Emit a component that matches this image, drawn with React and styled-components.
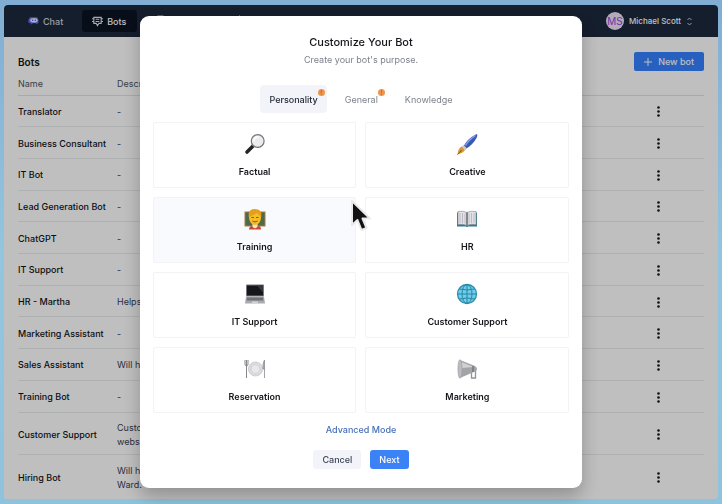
import React from "react";
import styled, { createGlobalStyle } from "styled-components";

const GlobalStyle = createGlobalStyle`
  * { box-sizing: border-box; }
  body {
    margin: 0;
    background: linear-gradient(#82add2, #93c5df 50%, #8fc3dd);
    font-family: Inter, "Liberation Sans", sans-serif;
    color: #14161a;
  }
  button { font: inherit; border: 0; cursor: pointer; }
  svg { display: block; flex: none; }
`;

const Desktop = styled.div`
  min-height: 100vh;
  display: flex;
  padding: 5px 4px;
`;

const Window = styled.div`
  flex: 1;
  min-width: 0;
  border-radius: 4px;
  overflow: hidden;
  background: #fff;
`;

const TopBar = styled.header`
  height: 32px;
  display: flex;
  align-items: center;
  justify-content: space-between;
  padding: 0 25px 0 14px;
  background: #1d283c;
`;

const Nav = styled.nav`
  display: flex;
  gap: 9px;
`;

const NavLink = styled.a`
  display: flex;
  align-items: center;
  gap: 4px;
  height: 22px;
  min-width: ${(p) => (p.$wide ? "67px" : "55px")};
  padding: 0 10px;
  border-radius: 3px;
  font-size: 9px;
  font-weight: 500;
  text-decoration: none;
  color: ${(p) => (p.$active ? "#ffffff" : "#cfd5de")};
  background: ${(p) => (p.$active ? "#0b1322" : "transparent")};
`;

const Account = styled.button`
  display: flex;
  align-items: center;
  gap: 5px;
  padding: 0;
  background: none;
  color: #fff;
  font-size: 8px;
  font-weight: 500;
`;

const Avatar = styled.span`
  width: 18px;
  height: 18px;
  border-radius: 50%;
  background: #f0e3fa;
  color: #9747d8;
  font-size: 10px;
  font-weight: 400;
  line-height: 18px;
  text-align: center;
`;

const Content = styled.main`
  padding: 15px 14px 0;
`;

const ContentHead = styled.div`
  display: flex;
  align-items: center;
  justify-content: space-between;
  height: 19px;
`;

const PageTitle = styled.h1`
  margin: 0;
  font-size: 10px;
  font-weight: 600;
`;

const NewBotButton = styled.button`
  display: flex;
  align-items: center;
  gap: 6px;
  height: 19px;
  padding: 0 10px;
  border-radius: 2px;
  background: #3580ff;
  color: #fff;
  font-size: 9px;
  font-weight: 500;
`;

const BotTable = styled.table`
  width: 100%;
  height: calc(100vh - 77px);
  border-collapse: collapse;
  table-layout: fixed;
  font-size: 9px;
  line-height: 14px;
  text-align: left;
`;

const ColumnHead = styled.th`
  width: ${(p) => p.$width || "auto"};
  height: 24px;
  padding: 2px 0 0;
  font-weight: 400;
  color: #4b5563;
  border-bottom: 1px solid #dfe2e6;
`;

const Cell = styled.td`
  height: ${(p) => (p.$tall ? "42px" : "31px")};
  padding: 2px 0 0;
  color: #374151;
  border-bottom: 1px solid #e9ebee;
  white-space: pre-line;
  tr:last-child & { border-bottom: 0; }
`;

const NameCell = styled(Cell)`
  color: #111318;
  font-weight: 500;
`;

const MoreButton = styled.button`
  display: block;
  padding: 2px 0;
  background: none;
`;

const Overlay = styled.div`
  position: fixed;
  inset: 5px 4px;
  display: flex;
  align-items: center;
  justify-content: center;
  border-radius: 4px;
  background: rgba(0, 0, 0, 0.25);
`;

const Dialog = styled.section`
  width: 62%;
  min-width: 360px;
  padding: 19px 13px 19px;
  border-radius: 9px;
  background: #fff;
  box-shadow: 0 8px 18px rgba(0, 0, 0, 0.25);
  display: flex;
  flex-direction: column;
`;

const DialogTitle = styled.h2`
  margin: 0;
  font-size: 11px;
  line-height: 15px;
  font-weight: 500;
  text-align: center;
`;

const Subtitle = styled.p`
  margin: 3px 0 18px;
  font-size: 9px;
  line-height: 14px;
  text-align: center;
  color: #7b808a;
`;

const Tabs = styled.div`
  display: flex;
  justify-content: center;
  gap: 9px;
  margin-bottom: 9px;
`;

const Tab = styled.button`
  height: 28px;
  padding: 0 9px;
  border-radius: 4px;
  font-size: 9px;
  font-weight: ${(p) => (p.$active ? 500 : 400)};
  color: ${(p) => (p.$active ? "#1f2533" : "#7d828c")};
  background: ${(p) => (p.$active ? "#f3f4f9" : "transparent")};
`;

const TabText = styled.span`
  position: relative;
`;

const Alert = styled.span`
  position: absolute;
  top: -5px;
  right: -7px;
  width: 7px;
  height: 7px;
  border-radius: 50%;
  background: #f0944a;
  color: #b05a1c;
  font-size: 6px;
  line-height: 7px;
  text-align: center;
`;

const CardGrid = styled.div`
  display: grid;
  grid-template-columns: 1fr 1fr;
  gap: 9px;
`;

const Card = styled.button`
  height: 66px;
  display: flex;
  flex-direction: column;
  align-items: center;
  gap: 10px;
  padding: 10px 0 0;
  border: 1px solid #f3f3f5;
  border-radius: 2px;
  background: ${(p) => (p.$hover ? "#f9fafe" : "#fff")};
  color: #14161a;
  font-size: 9px;
  line-height: 14px;
  font-weight: 600;
`;

const ModeLink = styled.a`
  align-self: center;
  margin: 10px 0 13px;
  font-size: 9px;
  line-height: 14px;
  font-weight: 500;
  text-decoration: none;
  color: #456fb5;
`;

const Actions = styled.div`
  display: flex;
  justify-content: center;
  gap: 9px;
`;

const ActionButton = styled.button`
  height: 19px;
  padding: 0 9px;
  border-radius: 3px;
  font-size: 9px;
  font-weight: 500;
  color: ${(p) => (p.$primary ? "#fff" : "#3d4557")};
  background: ${(p) => (p.$primary ? "#3b82f6" : "#f3f4f9")};
`;

const Pointer = styled.div`
  position: fixed;
  left: 349px;
  top: 199px;
  pointer-events: none;
`;

const ChatIcon = () => (
  <svg width="11" height="10" viewBox="0 0 12 10">
    <path d="M2 1h8q2 3 1.500 6L9.500 8.500 8.500 7.500H5L3 9V7.500L.5 7Q0 3 2 1z" fill="#6068ef" />
    <rect x="2.500" y="2" width="8" height="4.500" rx="2.200" fill="#e6e8ff" />
    <circle cx="5" cy="4.200" r=".8" fill="#5159d8" />
    <circle cx="8" cy="4.200" r=".8" fill="#5159d8" />
  </svg>
);

const BotsIcon = () => (
  <svg width="11" height="11" viewBox="0 0 12 12" fill="none" stroke="#e1e6ec" strokeWidth="1.200">
    <path d="M2 1.500h8v6.500H7.500L6 10.500 4.500 8H2z" />
    <path d="M0 3h2M0 6h2M10 3h2M10 6h2M4 3.500h4M4 6h4" />
  </svg>
);

const FolderIcon = () => (
  <svg width="13" height="13" viewBox="0 0 13 13" fill="none" stroke="#d5dbe2" strokeWidth="1.200">
    <path d="M2 4V1h5l1.500 2H11v9H2z" />
  </svg>
);

const PencilIcon = () => (
  <svg width="13" height="13" viewBox="0 0 13 13" fill="none" stroke="#d5dbe2" strokeWidth="1.200">
    <path d="m1.500 9 6-8 3 2.500-6 8H1.500z" />
  </svg>
);

const MoreIcon = () => (
  <svg width="3" height="11" viewBox="0 0 3 11" fill="#15171b">
    <circle cx="1.500" cy="1.500" r="1.300" />
    <circle cx="1.500" cy="5.500" r="1.300" />
    <circle cx="1.500" cy="9.500" r="1.300" />
  </svg>
);

const Art = ({ children }) => (
  <svg width="22" height="22" viewBox="0 0 22 22" aria-hidden="true">{children}</svg>
);

const Magnifier = () => (
  <Art>
    <path d="M9.500 12.500 3 19" stroke="#232323" strokeWidth="3.600" strokeLinecap="round" />
    <path d="M10.500 11.500 9 13" stroke="#999" strokeWidth="2" />
    <circle cx="13.700" cy="8" r="6.400" fill="#ececef" stroke="#77777b" strokeWidth="1.200" />
    <path d="M10 7.500a4 4 0 0 1 4-3.500" stroke="#fff" strokeWidth="1.600" fill="none" strokeLinecap="round" />
  </Art>
);

const Brush = () => (
  <Art>
    <path d="M7.500 13.500Q11 6 20.500 1 22 1.500 21 4 17 12 9.500 16z" fill="#3959b4" />
    <path d="M9.500 12.500Q13 6.500 19.500 2.500" stroke="#8ba5e6" strokeWidth="1.400" fill="none" />
    <path d="m7.500 12 3.500 3.500-2 2L5.500 14z" fill="#c9cbd1" />
    <path d="M5.500 13.500 9 17q-2 3.500-7.500 4 .5-5.500 4-7.500z" fill="#d49a3a" />
    <path d="M1.500 21.500Q4 20 5.500 17" stroke="#7e5218" fill="none" />
  </Art>
);

const Teacher = () => (
  <Art>
    <rect x="1" y="4" width="20" height="14" fill="#4d6b4a" stroke="#a97b45" />
    <path d="M5 21.500q0-4 6-4t6 4z" fill="#c8452f" />
    <path d="M8.500 16h5v3L11 20.500 8.500 19z" fill="#fbe3c4" />
    <ellipse cx="11" cy="9.500" rx="6" ry="7.500" fill="#f7bd26" />
    <path d="M4.800 9Q3.500 1 11 1t6.200 8Q15 7 13 5 9 7.500 4.800 9z" fill="#e5a01b" />
    <path d="M7.500 9.500h2.500M12 9.500h2.500M8.500 13q2.500 2 5 0" stroke="#8b5511" fill="none" />
  </Art>
);

const Book = () => (
  <Art>
    <path d="M1 4.500h20v14h-9l-1 .8-1-.8H1z" fill="#347790" />
    <path d="M2 3.500q5-1 9 1 4-2 9-1v13q-5-1-9 1-4-2-9-1z" fill="#e3e3e7" stroke="#8d929c" strokeWidth=".7" />
    <path d="M11 4.500v13" stroke="#454950" strokeWidth="1.200" />
    <path d="M4 5v10M6.500 5v10M9 5.500v10M13 5.500v10M15.500 5v10M18 5v10" stroke="#b4b6bd" strokeWidth=".9" />
  </Art>
);

const Laptop = () => (
  <Art>
    <rect x="2" y="1.500" width="18" height="12" rx=".7" fill="#767980" />
    <path d="M3 2.500h16v10H3z" fill="#15171a" />
    <path d="m13 2.500 6 7v-7z" fill="#35373c" />
    <path d="M2 13.500h18l1 7H1z" fill="#aaabb0" />
    <path d="M3 14.500h16l.4 3H2.600z" fill="#707278" />
    <path d="M8 18.500h6v1.500H8z" fill="#d5d5da" />
  </Art>
);

const Globe = () => (
  <Art>
    <circle cx="11" cy="11" r="9.500" fill="#6fcdea" stroke="#2c8fb0" strokeWidth="1.300" />
    <ellipse cx="11" cy="11" rx="5" ry="9.500" fill="none" stroke="#2786a5" strokeWidth="1" />
    <path d="M11 1.500v19M1.500 11h19M3.500 6q7.500 2 15 0M3.500 16q7.500-2 15 0" fill="none" stroke="#2786a5" />
  </Art>
);

const Plate = () => (
  <Art>
    <circle cx="11.500" cy="11" r="7" fill="#dddde1" stroke="#c3c3c8" strokeWidth=".8" />
    <circle cx="11.500" cy="11" r="4.500" fill="#e8e8eb" stroke="#c7c7cd" strokeWidth=".7" />
    <path d="M1 2v4q0 2 1.500 2T4 6V2M2.500 2v18" fill="none" stroke="#85868c" />
    <path d="M20.500 20V2q-2 3-1.500 9h1.500" fill="#b5b5ba" stroke="#8a8b91" strokeWidth=".8" />
  </Art>
);

const Megaphone = () => (
  <Art>
    <path d="M15.500 12h4v8h-4v-7" fill="none" stroke="#929398" strokeWidth="1.300" />
    <path d="m4 2 15 6q2 1.500 2 3t-2 2.500L4 20z" fill="#a3a4a8" />
    <path d="m5 4 13 5-13 1z" fill="#d2d2d5" />
    <ellipse cx="4" cy="11" rx="2" ry="9.300" fill="#bcbcc0" stroke="#a1a2a6" strokeWidth=".8" />
    <path d="M17 8v6" stroke="#6f7074" strokeWidth="1.300" />
  </Art>
);

const bots = [
  ["Translator", "-"],
  ["Business Consultant", "-"],
  ["IT Bot", "-"],
  ["Lead Generation Bot", "-"],
  ["ChatGPT", "-"],
  ["IT Support", "-"],
  ["HR - Martha", "Helps"],
  ["Marketing Assistant", "-"],
  ["Sales Assistant", "Will h"],
  ["Training Bot", "-"],
  ["Customer Support", "Custo\nwebsi"],
  ["Hiring Bot", "Will h\nWard."],
];

const purposes = [
  ["Factual", Magnifier],
  ["Creative", Brush],
  ["Training", Teacher],
  ["HR", Book],
  ["IT Support", Laptop],
  ["Customer Support", Globe],
  ["Reservation", Plate],
  ["Marketing", Megaphone],
];

export default function App() {
  return (
    <Desktop>
      <GlobalStyle />
      <Window>
        <TopBar>
          <Nav>
            <NavLink href="#chat"><ChatIcon />Chat</NavLink>
            <NavLink href="#bots" $active><BotsIcon />Bots</NavLink>
            <NavLink href="#files" $wide aria-label="Files"><FolderIcon /></NavLink>
            <NavLink href="#edit" $wide aria-label="Edit"><PencilIcon /></NavLink>
          </Nav>
          <Account>
            <Avatar>MS</Avatar>
            Michael Scott
            <svg width="7" height="9" viewBox="0 0 7 9" fill="none" stroke="#c8ced8">
              <path d="m1.500 3 2-2 2 2M1.500 6l2 2 2-2" />
            </svg>
          </Account>
        </TopBar>
        <Content>
          <ContentHead>
            <PageTitle>Bots</PageTitle>
            <NewBotButton>
              <svg width="8" height="8" viewBox="0 0 8 8" stroke="#fff"><path d="M4 0v8M0 4h8" /></svg>
              New bot
            </NewBotButton>
          </ContentHead>
          <BotTable>
            <thead>
              <tr>
                <ColumnHead $width="99px">Name</ColumnHead>
                <ColumnHead>Description</ColumnHead>
                <ColumnHead $width="47px" aria-label="Actions" />
              </tr>
            </thead>
            <tbody>
              {bots.map(([name, about]) => {
                const tall = about.includes("\n");
                return (
                  <tr key={name}>
                    <NameCell $tall={tall}>{name}</NameCell>
                    <Cell $tall={tall}>{about}</Cell>
                    <Cell $tall={tall}>
                      <MoreButton aria-label={`Options for ${name}`}><MoreIcon /></MoreButton>
                    </Cell>
                  </tr>
                );
              })}
            </tbody>
          </BotTable>
        </Content>
      </Window>
      <Overlay>
        <Dialog role="dialog" aria-labelledby="dialog-title">
          <DialogTitle id="dialog-title">Customize Your Bot</DialogTitle>
          <Subtitle>Create your bot's purpose.</Subtitle>
          <Tabs role="tablist">
            <Tab role="tab" aria-selected="true" $active><TabText>Personality<Alert>!</Alert></TabText></Tab>
            <Tab role="tab" aria-selected="false"><TabText>General<Alert>!</Alert></TabText></Tab>
            <Tab role="tab" aria-selected="false"><TabText>Knowledge</TabText></Tab>
          </Tabs>
          <CardGrid>
            {purposes.map(([label, Icon]) => (
              <Card key={label} $hover={label === "Training"}><Icon />{label}</Card>
            ))}
          </CardGrid>
          <ModeLink href="#advanced">Advanced Mode</ModeLink>
          <Actions>
            <ActionButton>Cancel</ActionButton>
            <ActionButton $primary>Next</ActionButton>
          </Actions>
        </Dialog>
      </Overlay>
      <Pointer>
        <svg width="24" height="34" viewBox="0 0 24 34">
          <path d="M3 2v24l5.500-5 4 10 5-2-4-9.500H21z" fill="#111" stroke="#e9e9ec" strokeWidth="2" strokeLinejoin="round" />
        </svg>
      </Pointer>
    </Desktop>
  );
}
